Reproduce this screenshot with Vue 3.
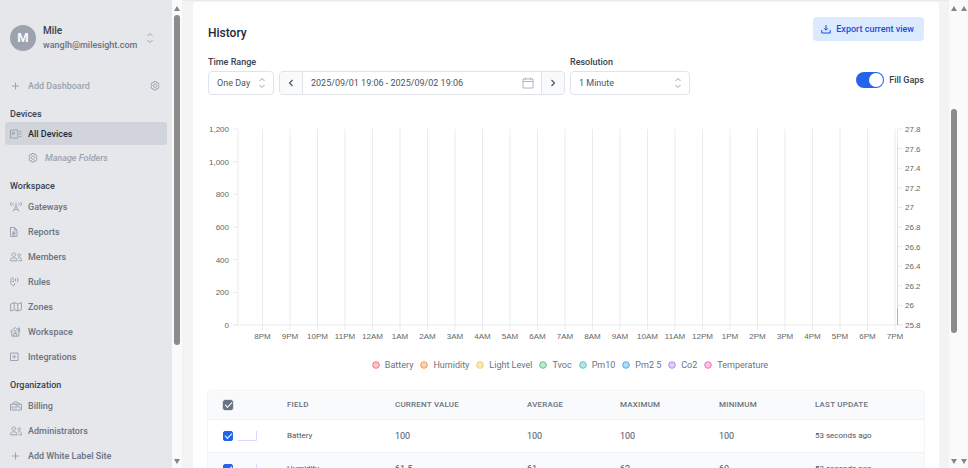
<script setup>
import { ref } from 'vue'

const workspaceLinks = [
  { label: 'Gateways', icon: 'gateway' },
  { label: 'Reports', icon: 'report' },
  { label: 'Members', icon: 'members' },
  { label: 'Rules', icon: 'rules' },
  { label: 'Zones', icon: 'zones' },
  { label: 'Workspace', icon: 'home' },
  { label: 'Integrations', icon: 'plusbox' },
]
const organizationLinks = [
  { label: 'Billing', icon: 'billing' },
  { label: 'Administrators', icon: 'members' },
  { label: 'Add White Label Site', icon: 'plus' },
]

const icons = {
  plus: 'M2 6h7M5.5 2.5v7',
  gateway: 'M6 4.500 3.200 10.500M6 4.500 8.800 10.500M4.300 8.500h3.400M6 1.500v2.500M1.500 1C.2 2.200.2 4 1.500 5.200M10.500 1c1.300 1.200 1.300 3 0 4.200M3.500 1.800c-.7.7-.7 1.900 0 2.600M8.500 1.800c.7.7.7 1.900 0 2.600',
  report: 'M.5 1.500h4L7 4v6.500H.5zM4.500 1.500V4H7M2 6h3.500M2 7.500h3.500M2 9h3.500M3.800 6v3',
  members: 'M3.700 1.800a1.800 1.800 0 1 0 .01 0M.5 9.800V8.500c0-2.200 6.500-2.200 6.500 0v1.300zM9.200 2.800a1.300 1.300 0 1 0 .01 0M8.200 7c1.800-.6 3.300.2 3.300 1.500v1.300H8.500',
  rules: 'M4 2.500C2 1 .2 2.800 1 4.800-.3 6.500.8 8 1.800 8c0 2 2.200 2.500 2.700 1V7.200M2 5.500h2M2.500 3.500l1.500.8M5.500 2.500v3M7.300 1.800c.9 1.400.9 3 0 4.400',
  zones: 'M.6 3 4.200 1.700 7.800 3l3.600-1.300v7L7.800 10 4.200 8.700.6 10zM4.200 1.700v7M7.800 3v7',
  home: 'M.3 6 5.200 1.500 10.100 6M1.800 5v5.200h7V5M8.200 4V2h1.300v3M3.800 10V7.500h3V10M5.300 4.600a.9.9 0 1 0 .01 0',
  plusbox: 'M.5 2h7.500v7.500H.5zM4.250 3.800v3.900M2.300 5.750h3.900',
  billing: 'M.5 4.200v5.800h11V4.200zM2 4 5.500 1.500 10 4M2.300 8.500V6M4.200 8.500V6.500M6 8.500V5.500M5 3.500l5 5M8 5.500l2 2',
  devices: 'M.5 2h7.300v8H.5zM2.300 4.300h2v2H2.300zM9.300 3.500h2.200M9.300 6h2.200M9.300 8.500h2.200',
  gear: 'M4.900 1.500h2.200l.4 1.300 1.400-.3 1.100 1.900-.9 1.100.9 1.600-1.100 1.900-1.400-.3-.4 1.300H4.900l-.4-1.300-1.400.3L2 7.100l.9-1.600L2 4.400l1.100-1.900 1.400.3zM6 4a1.700 1.700 0 1 0 .01 0',
}

const range = ref('One Day')
const resolution = ref('1 Minute')
const period = ref('2025/09/01 19:06 - 2025/09/02 19:06')
const fillGaps = ref(true)
const allSelected = ref(true)

const hours = ['8PM', '9PM', '10PM', '11PM', '12AM', '1AM', '2AM', '3AM', '4AM', '5AM', '6AM', '7AM', '8AM', '9AM', '10AM', '11AM', '12PM', '1PM', '2PM', '3PM', '4PM', '5PM', '6PM', '7PM']
const plot = { left: 30, right: 690, top: 8, bottom: 204 }
const hourTicks = hours.map((label, i) => ({ label, x: 54.5 + i * 27.5 }))
const span = plot.bottom - plot.top
const leftTicks = ['1,200', '1,000', '800', '600', '400', '200', '0'].map((label, i) => ({ label, y: plot.top + (i * span) / 6 }))
const rightTicks = ['27.8', '27.6', '27.4', '27.2', '27', '26.8', '26.6', '26.4', '26.2', '26', '25.8'].map((label, i) => ({ label, y: plot.top + (i * span) / 10 }))

const series = [
  { name: 'Battery', stroke: '#f87979', fill: '#fdc5c9' },
  { name: 'Humidity', stroke: '#f6984f', fill: '#fbd3b3' },
  { name: 'Light Level', stroke: '#f0ce62', fill: '#f9eabd' },
  { name: 'Tvoc', stroke: '#5fc588', fill: '#bde8cd' },
  { name: 'Pm10', stroke: '#5cc4bd', fill: '#bce6e3' },
  { name: 'Pm2 5', stroke: '#5aa7ea', fill: '#b5d8f8' },
  { name: 'Co2', stroke: '#ad8df0', fill: '#dccffa' },
  { name: 'Temperature', stroke: '#f272b4', fill: '#fbc4e0' },
]

const rows = ref([
  { field: 'Battery', current: '100', average: '100', max: '100', min: '100', updated: '53 seconds ago', on: true },
  { field: 'Humidity', current: '61.5', average: '61', max: '62', min: '60', updated: '53 seconds ago', on: true },
])
</script>

<template>
  <div class="app">
    <aside class="sidebar">
      <button class="account" type="button">
        <span class="avatar">M</span>
        <span class="who"><strong>Mile</strong><span>wanglh@milesight.com</span></span>
        <svg class="updown" viewBox="0 0 8 12"><path d="M1.500 4 4 1.500 6.500 4M1.500 8 4 10.500 6.500 8" /></svg>
      </button>

      <nav class="nav">
        <div class="dashboard">
          <a href="#" class="link muted"><svg class="icon" viewBox="0 0 12 12"><path :d="icons.plus" /></svg>Add Dashboard</a>
          <button class="settings" type="button" aria-label="Dashboard settings"><svg class="icon" viewBox="0 0 12 12"><path :d="icons.gear" /></svg></button>
        </div>

        <h2>Devices</h2>
        <a href="#" class="link active"><svg class="icon" viewBox="0 0 12 12"><path :d="icons.devices" /></svg>All Devices</a>
        <a href="#" class="link folders"><svg class="icon" viewBox="0 0 12 12"><path :d="icons.gear" /></svg>Manage Folders</a>

        <h2>Workspace</h2>
        <a v-for="l in workspaceLinks" :key="l.label" href="#" class="link"><svg class="icon" viewBox="0 0 12 12"><path :d="icons[l.icon]" /></svg>{{ l.label }}</a>

        <h2>Organization</h2>
        <a v-for="l in organizationLinks" :key="l.label" href="#" class="link"><svg class="icon" viewBox="0 0 12 12"><path :d="icons[l.icon]" /></svg>{{ l.label }}</a>
      </nav>
    </aside>

    <div class="scrollbar side-scroll">
      <svg class="arrow" viewBox="0 0 6 5"><path d="M3 0 6 5H0z" /></svg>
      <span class="track"><span class="thumb side-thumb"></span></span>
      <svg class="arrow" viewBox="0 0 6 5"><path d="M3 5 6 0H0z" /></svg>
    </div>

    <main class="main">
      <section class="card">
        <header class="head">
          <h1>History</h1>
          <button class="export" type="button">
            <svg viewBox="0 0 10 10"><path d="M5 1v5M3 4.200 5 6.200 7 4.200M.8 6v3h8.400V6" /></svg>
            Export current view
          </button>
        </header>

        <div class="filters">
          <div class="field range">
            <label for="range">Time Range</label>
            <div class="select">
              <select id="range" v-model="range"><option>One Day</option></select>
              <svg class="updown" viewBox="0 0 8 12"><path d="M1.500 4 4 1.500 6.500 4M1.500 8 4 10.500 6.500 8" /></svg>
            </div>
          </div>
          <div class="period">
            <button type="button" aria-label="Previous period"><svg viewBox="0 0 8 8"><path d="M5.500 1 2.500 4l3 3" /></svg></button>
            <input v-model="period" type="text" aria-label="Period" />
            <svg class="calendar" viewBox="0 0 12 12"><path d="M1 2h10v9H1zM1 4.500h10M3.500.5V2.500M8.500.5V2.500" /></svg>
            <button type="button" aria-label="Next period"><svg viewBox="0 0 8 8"><path d="M2.500 1l3 3-3 3" /></svg></button>
          </div>
          <div class="field resolution">
            <label for="resolution">Resolution</label>
            <div class="select">
              <select id="resolution" v-model="resolution"><option>1 Minute</option></select>
              <svg class="updown" viewBox="0 0 8 12"><path d="M1.500 4 4 1.500 6.500 4M1.500 8 4 10.500 6.500 8" /></svg>
            </div>
          </div>
          <label class="gaps"><input v-model="fillGaps" type="checkbox" role="switch" />Fill Gaps</label>
        </div>

        <svg class="chart" viewBox="0 0 716 224" role="img" aria-label="History chart">
          <g class="grid">
            <path :d="`M${plot.left} ${plot.top}V${plot.bottom}M25 ${plot.bottom}H${plot.right + 5}`" />
            <path v-for="t in hourTicks" :key="t.label" :d="`M${t.x} ${plot.top}V${plot.bottom + 5}`" />
            <path v-for="t in leftTicks" :key="t.label" :d="`M25 ${t.y}H${plot.left}`" />
            <path v-for="t in rightTicks" :key="t.label" :d="`M${plot.right} ${t.y}h5`" />
            <path :d="`M${plot.right - 0.5} ${plot.top}v14`" />
          </g>
          <path class="trace violet" d="M689.500 22V110" />
          <path class="trace purple" d="M689.500 110V187" />
          <path class="trace red" d="M689.500 187V204" />
          <g class="ticks">
            <text v-for="t in leftTicks" :key="t.label" x="21" :y="t.y + 3" text-anchor="end">{{ t.label }}</text>
            <text v-for="t in rightTicks" :key="t.label" x="697" :y="t.y + 3">{{ t.label }}</text>
            <text v-for="t in hourTicks" :key="t.label" :x="t.x" y="218" text-anchor="middle">{{ t.label }}</text>
          </g>
        </svg>

        <ul class="legend">
          <li v-for="s in series" :key="s.name">
            <svg viewBox="0 0 8 8"><circle cx="4" cy="4" r="3.300" :fill="s.fill" :stroke="s.stroke" /></svg>{{ s.name }}
          </li>
        </ul>

        <table class="table">
          <colgroup><col class="c1" /><col class="c2" /><col class="c3" /><col class="c4" /><col class="c5" /><col class="c6" /><col class="c7" /></colgroup>
          <thead>
            <tr>
              <th><input v-model="allSelected" class="check all" type="checkbox" aria-label="Select all fields" /></th>
              <th>FIELD</th><th>CURRENT VALUE</th><th>AVERAGE</th><th>MAXIMUM</th><th>MINIMUM</th><th>LAST UPDATE</th>
            </tr>
          </thead>
          <tbody>
            <tr v-for="r in rows" :key="r.field">
              <td>
                <div class="pick">
                  <input v-model="r.on" class="check" type="checkbox" :aria-label="r.field" />
                  <svg class="spark" viewBox="0 0 20 10"><path d="M0 9.500H18.500V0" /></svg>
                </div>
              </td>
              <td>{{ r.field }}</td>
              <td class="num">{{ r.current }}</td>
              <td class="num">{{ r.average }}</td>
              <td class="num">{{ r.max }}</td>
              <td class="num">{{ r.min }}</td>
              <td>{{ r.updated }}</td>
            </tr>
          </tbody>
        </table>
      </section>
    </main>

    <div class="scrollbar page-scroll">
      <svg class="arrow" viewBox="0 0 6 5"><path d="M3 0 6 5H0z" /></svg>
      <span class="track"><span class="thumb page-thumb"></span></span>
      <svg class="arrow" viewBox="0 0 6 5"><path d="M3 5 6 0H0z" /></svg>
    </div>
    <div class="scrollbar outer-scroll">
      <svg class="arrow" viewBox="0 0 6 5"><path d="M3 0 6 5H0z" /></svg>
      <span class="track"></span>
      <svg class="arrow" viewBox="0 0 6 5"><path d="M3 5 6 0H0z" /></svg>
    </div>
  </div>
</template>

<style>
body {
  overflow: hidden;
}
</style>

<style scoped>
* {
  box-sizing: border-box;
}
.app {
  display: grid;
  grid-template-columns: 172px 10px minmax(0, 1fr) 10px 9px;
  height: 100vh;
  overflow: hidden;
  background: #f1f3f5;
  color: #4b5563;
  font: 400 9px/14px Roboto, "Liberation Sans", sans-serif;
}
button,
input,
select {
  margin: 0;
  font: inherit;
  color: inherit;
}
svg {
  display: block;
  flex: none;
  fill: none;
  stroke: currentColor;
}

/* Sidebar */
.sidebar {
  overflow: hidden;
  padding: 0 5px;
  background: #e5e7eb;
}
.account {
  display: flex;
  align-items: center;
  width: 100%;
  height: 73px;
  padding: 2px 13px 0 5px;
  border: 0;
  background: none;
  text-align: left;
}
.avatar {
  flex: none;
  width: 26px;
  height: 26px;
  margin-right: 7px;
  border-radius: 50%;
  background: #9ca3af;
  color: #f9fafb;
  font-weight: 700;
  font-size: 13px;
  line-height: 26px;
  text-align: center;
}
.who {
  flex: 1;
  display: grid;
  color: #6b7280;
  font-weight: 500;
}
.who strong {
  color: #374151;
  font-weight: 500;
  font-size: 10px;
}
.updown {
  width: 8px;
  height: 12px;
  color: #9ca3af;
}
.nav h2 {
  margin: 8px 0 0;
  padding: 0 5px;
  color: #374151;
  font-weight: 500;
  font-size: 9px;
  line-height: 16px;
}
.link {
  display: flex;
  align-items: center;
  height: 25px;
  padding-left: 5px;
  border-radius: 3px;
  color: #6b7280;
  font-weight: 500;
  text-decoration: none;
}
.icon {
  width: 12px;
  height: 12px;
  margin-right: 6px;
  color: #9ca3af;
  stroke-width: 1;
}
.link.muted,
.link.folders {
  color: #9ca3af;
}
.link.active {
  height: 23px;
  background: #d1d5db;
  color: #1f2937;
}
.link.folders {
  padding-left: 22px;
  font-style: italic;
}
.dashboard {
  display: flex;
  justify-content: space-between;
  align-items: center;
}
.settings {
  padding: 0 0 0 6px;
  border: 0;
  background: none;
}

/* Scrollbars */
.scrollbar {
  display: flex;
  flex-direction: column;
  align-items: center;
  gap: 4px;
  padding: 6px 0 4px;
  background: #fafafa;
}
.arrow {
  width: 6px;
  height: 5px;
  fill: #858585;
  stroke: none;
}
.track {
  flex: 1;
  display: flex;
  flex-direction: column;
}
.thumb {
  width: 6px;
  border-radius: 3px;
  background: #8b8b8b;
}
.side-thumb {
  height: 75%;
}
.page-thumb {
  height: 51%;
  margin-top: 94px;
}

/* Content */
.main {
  overflow: hidden;
  padding: 1px 10px 0 11px;
  border-top: 1px solid #e9eaed;
}
.card {
  padding: 15px 15px 14px;
  border-radius: 4px;
  background: #fff;
}
.head {
  display: flex;
  justify-content: space-between;
}
h1 {
  margin: 8px 0 0;
  color: #1f2937;
  font-weight: 500;
  font-size: 12px;
  line-height: 16px;
}
.export {
  display: flex;
  align-items: center;
  gap: 5px;
  height: 24px;
  padding: 0 10px 0 8px;
  border: 0;
  border-radius: 4px;
  background: #dbeafe;
  color: #1d4ed8;
  font-weight: 500;
}
.export svg {
  width: 10px;
  height: 10px;
}
.filters {
  display: flex;
  align-items: flex-end;
  gap: 5px;
  margin-top: 14px;
}
.field label {
  display: block;
  margin-bottom: 2px;
  color: #374151;
  font-weight: 500;
}
.range {
  width: 66px;
}
.resolution {
  width: 120px;
}
.select {
  display: grid;
}
.select select {
  grid-area: 1 / 1;
  appearance: none;
  width: 100%;
  height: 24px;
  padding: 0 8px;
  border: 1px solid #e0e3e8;
  border-radius: 4px;
  background: #fff;
}
.select .updown {
  grid-area: 1 / 1;
  place-self: center end;
  margin-right: 8px;
  pointer-events: none;
}
.period {
  display: flex;
  align-items: center;
  width: 286px;
  height: 24px;
  border: 1px solid #e0e3e8;
  border-radius: 4px;
  overflow: hidden;
}
.period button {
  display: grid;
  place-items: center;
  width: 23px;
  height: 24px;
  padding: 0;
  border: 0 solid #e0e3e8;
  background: #f9fafb;
}
.period button:first-child {
  border-right-width: 1px;
}
.period button:last-child {
  border-left-width: 1px;
}
.period button svg {
  width: 8px;
  height: 8px;
  stroke-width: 1.2;
}
.period input {
  flex: 1;
  min-width: 0;
  padding: 0 8px;
  border: 0;
  background: none;
}
.calendar {
  width: 12px;
  height: 12px;
  margin-right: 7px;
  color: #9ca3af;
  stroke-width: 0.8;
}
.gaps {
  display: flex;
  align-items: center;
  gap: 5px;
  height: 16px;
  margin: 0 0 7px auto;
  color: #374151;
  font-weight: 500;
}
.gaps input {
  appearance: none;
  width: 28px;
  height: 16px;
  border-radius: 8px;
  background: #d1d5db;
}
.gaps input::before {
  content: "";
  display: block;
  width: 14px;
  height: 14px;
  margin: 1px;
  border-radius: 50%;
  background: #fff;
}
.gaps input:checked {
  background: #2563eb;
}
.gaps input:checked::before {
  margin-left: 13px;
}
.chart {
  width: 100%;
  height: auto;
  margin-top: 26px;
}
.grid {
  stroke: #ebebeb;
}
.trace {
  stroke-width: 1;
}
.violet {
  stroke: #dedafa;
}
.purple {
  stroke: #e6cdf0;
}
.red {
  stroke: #f09a94;
}
.ticks {
  fill: #666;
  stroke: none;
  font: 400 8px "Liberation Sans", Arial, sans-serif;
}
.legend {
  display: flex;
  flex-wrap: wrap;
  justify-content: center;
  gap: 7px;
  margin: 13px 0 0;
  padding: 0 0 0 8px;
  list-style: none;
  color: #6b7280;
}
.legend li {
  display: flex;
  align-items: center;
  gap: 5px;
}
.legend svg {
  width: 8px;
  height: 8px;
}

/* Table */
.table {
  width: 100%;
  margin-top: 19px;
  table-layout: fixed;
  border-spacing: 0;
  border-radius: 4px 4px 0 0;
  box-shadow: 0 0 0 1px #f3f4f6;
  overflow: hidden;
  font-size: 8px;
}
.c1 { width: 79px; }
.c2 { width: 108px; }
.c3 { width: 132px; }
.c4 { width: 93px; }
.c5 { width: 99px; }
.c6 { width: 96px; }
.c7 { width: 109px; }
.table th,
.table td {
  padding: 0;
  border-bottom: 1px solid #f0f1f3;
  text-align: left;
}
.table th:first-child,
.table td:first-child {
  padding-left: 15px;
}
.table th {
  height: 29px;
  background: #f9fafb;
  color: #6b7280;
  font-weight: 500;
  letter-spacing: 0.025em;
}
.table td {
  height: 33px;
}
.table .num {
  font-size: 9px;
}
.table tbody tr:nth-child(even) {
  background: #f9fafb;
}
.pick {
  display: flex;
  align-items: center;
  gap: 5px;
}
.check {
  appearance: none;
  display: grid;
  place-items: center;
  width: 10px;
  height: 10px;
  border: 1px solid #9ca3af;
  border-radius: 2px;
}
.check:checked {
  border-color: #2563eb;
  background: #2563eb;
}
.check::before {
  content: "";
  width: 6px;
  height: 3px;
  margin-bottom: 2px;
  border: solid #fff;
  border-width: 0 0 1px 1px;
  transform: rotate(-45deg);
}
.check.all:checked {
  border-color: #6b7280;
  background: #6b7280;
  box-shadow: 0 0 0 1px #e0e4f2;
}
.spark {
  width: 20px;
  height: 10px;
  color: #ddd6fe;
}
</style>
